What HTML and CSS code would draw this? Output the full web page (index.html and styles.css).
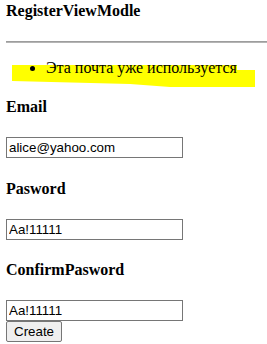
FILE: index.html
```html
<!DOCTYPE html>
<html lang="ru">
<head>
<meta charset="utf-8">
<title>Register</title>
<link rel="stylesheet" href="styles.css">
</head>
<body class="page">
<h4 class="title">RegisterViewModle</h4>
<hr class="rule">
<ul class="errors">
  <svg class="mark" width="243" height="22" viewBox="0 0 243 22" aria-hidden="true">
    <polygon points="0,0 225,0 225,5 243,5 243,22 158,22 118,19 0,16" fill="#ffff00"/>
  </svg>
  <li class="error">Эта почта уже используется</li>
</ul>
<form class="form">
  <h4 class="label">Email</h4>
  <input class="field" type="text" value="alice@yahoo.com">
  <h4 class="label">Pasword</h4>
  <input class="field" type="text" value="Aa!11111">
  <h4 class="label">ConfirmPasword</h4>
  <input class="field" type="text" value="Aa!11111">
  <button class="btn" type="button">Create</button>
</form>
</body>
</html>
```
FILE: styles.css
```css
html {
  background: #ffffff;
}
.page {
  margin: 0 0 0 6px;
  font-family: "Liberation Serif", "Times New Roman", serif;
  font-size: 16px;
  color: #000000;
}
.title {
  margin: 1.5px 0 21.28px;
  font-size: 16px;
  font-weight: bold;
  line-height: 18px;
}
.rule {
  margin: 8px 0;
  border: 0;
  border-top: 1px solid #9d9d9d;
  border-bottom: 1px solid #b4b4b4;
  height: 0;
}
.errors {
  position: relative;
  margin: 16px 0;
  padding-left: 40px;
  line-height: 18px;
}
.mark {
  position: absolute;
  left: 6px;
  top: 6px;
}
.error {
  position: relative;
}
.form {
  margin: 0;
}
.label {
  margin: 21.28px 0;
  font-size: 16px;
  font-weight: bold;
  line-height: 18px;
}
.field {
  display: block;
  box-sizing: border-box;
  width: 177px;
  height: 21px;
  margin: 0;
  padding: 1px 2px;
  border: 1px solid #767676;
  border-radius: 0;
  background: #ffffff;
  font-family: "Liberation Sans", Arial, sans-serif;
  font-size: 13.33px;
  color: #000000;
}
.btn {
  display: block;
  box-sizing: border-box;
  height: 21px;
  margin: 0;
  padding: 1px 7px;
  border: 1px solid #767676;
  border-radius: 2px;
  background: #efefef;
  font-family: "Liberation Sans", Arial, sans-serif;
  font-size: 13.33px;
  color: #000000;
}
```
